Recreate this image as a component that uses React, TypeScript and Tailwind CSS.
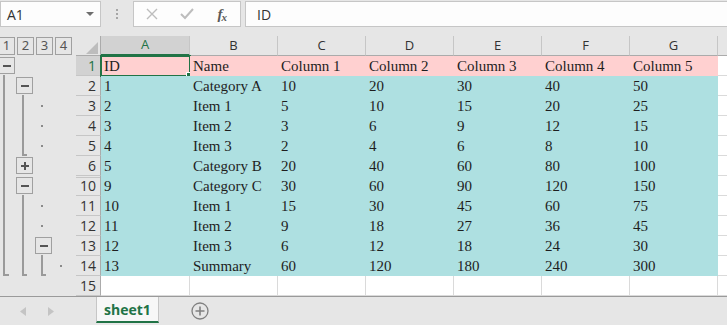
import React from 'react';

type Row = { n: number; cells: string[]; bg?: string };

const rows: Row[] = [
  { n: 1, cells: ['ID', 'Name', 'Column 1', 'Column 2', 'Column 3', 'Column 4', 'Column 5'], bg: 'pink' },
  { n: 2, cells: ['1', 'Category A', '10', '20', '30', '40', '50'], bg: 'teal' },
  { n: 3, cells: ['2', 'Item 1', '5', '10', '15', '20', '25'], bg: 'teal' },
  { n: 4, cells: ['3', 'Item 2', '3', '6', '9', '12', '15'], bg: 'teal' },
  { n: 5, cells: ['4', 'Item 3', '2', '4', '6', '8', '10'], bg: 'teal' },
  { n: 6, cells: ['5', 'Category B', '20', '40', '60', '80', '100'], bg: 'teal' },
  { n: 10, cells: ['9', 'Category C', '30', '60', '90', '120', '150'], bg: 'teal' },
  { n: 11, cells: ['10', 'Item 1', '15', '30', '45', '60', '75'], bg: 'teal' },
  { n: 12, cells: ['11', 'Item 2', '9', '18', '27', '36', '45'], bg: 'teal' },
  { n: 13, cells: ['12', 'Item 3', '6', '12', '18', '24', '30'], bg: 'teal' },
  { n: 14, cells: ['13', 'Summary', '60', '120', '180', '240', '300'], bg: 'teal' },
  { n: 15, cells: ['', '', '', '', '', '', ''] },
];

const cols = ['A', 'B', 'C', 'D', 'E', 'F', 'G'];

function OutlineGutter() {
  const btn = '#a0a0a0';
  const line = '#9a9a9a';
  return (
    <div className="w-[76px] flex flex-col">
      {/* level buttons */}
      <div className="h-5 flex gap-[2px] ml-[-2px] pt-px">
        {['1', '2', '3', '4'].map((l) => (
          <div
            key={l}
            className="w-[17px] h-[18px] border border-[#a0a0a0] flex items-center justify-center text-[13px] text-[#555]"
          >
            {l}
          </div>
        ))}
      </div>
      <svg width="76" height="240" className="block">
        <g fill="none" stroke={line} strokeWidth="2">
          <path d="M4 19 V219 H9" />
          <path d="M23 39 V99 H27" />
          <path d="M23 139 V219 H27" />
          <path d="M42 199 V219 H46" />
        </g>
        <g fill="#e6e6e6" stroke={btn} strokeWidth="1">
          <rect x="-2.5" y="1.5" width="17" height="16" />
          <rect x="16.5" y="21.5" width="16" height="16" />
          <rect x="16.5" y="101.5" width="16" height="16" />
          <rect x="16.5" y="121.5" width="16" height="16" />
          <rect x="35.5" y="181.5" width="16" height="16" />
        </g>
        <g fill="#555">
          <rect x="3" y="9" width="8" height="2" />
          <rect x="21" y="29" width="8" height="2" />
          <rect x="21" y="109" width="8" height="2" />
          <rect x="24" y="106" width="2" height="8" />
          <rect x="21" y="129" width="8" height="2" />
          <rect x="40" y="189" width="8" height="2" />
        </g>
        <g fill="#8a8a8a">
          <rect x="41" y="49" width="2" height="2" />
          <rect x="41" y="69" width="2" height="2" />
          <rect x="41" y="89" width="2" height="2" />
          <rect x="41" y="149" width="2" height="2" />
          <rect x="41" y="169" width="2" height="2" />
          <rect x="60" y="209" width="2" height="2" />
        </g>
      </svg>
    </div>
  );
}

function FormulaBar() {
  return (
    <div className="h-9 flex items-start pt-px font-['Open_Sans'] text-[14px] text-[#333]">
      <div className="w-[101px] h-[26px] bg-[#fdfdfd] border border-[#c6c6c6] flex items-center pl-[6px] pr-[6px] justify-between">
        <span>A1</span>
        <svg width="8" height="5" viewBox="0 0 8 5">
          <path d="M0 0 H8 L4 4 Z" fill="#6e6e6e" />
        </svg>
      </div>
      <div className="w-8 h-[26px] flex flex-col items-center justify-center gap-[2px]">
        <div className="w-[2px] h-[2px] bg-[#a6a6a6]" />
        <div className="w-[2px] h-[2px] bg-[#a6a6a6]" />
        <div className="w-[2px] h-[2px] bg-[#a6a6a6]" />
      </div>
      <div className="w-[108px] h-[26px] bg-[#fdfdfd] border border-[#c6c6c6] flex items-center">
        <div className="w-9 flex justify-center">
          <svg width="12" height="12" viewBox="0 0 12 12">
            <path d="M1 1 L11 11 M11 1 L1 11" stroke="#bdbdbd" strokeWidth="1.4" />
          </svg>
        </div>
        <div className="w-9 flex justify-center">
          <svg width="14" height="12" viewBox="0 0 14 12">
            <path d="M1 6 L5 10 L13 1" stroke="#bdbdbd" strokeWidth="2" fill="none" />
          </svg>
        </div>
        <div className="w-9 flex justify-center items-baseline font-['Liberation_Serif'] italic font-bold text-[15px] text-[#5a5a5a] leading-none">
          <span>f</span>
          <span className="text-[11px] relative top-[2px] -ml-px">x</span>
        </div>
      </div>
      <div className="flex-1 ml-1 h-[26px] bg-[#fdfdfd] border border-[#c6c6c6] border-r-0 flex items-center pl-[11px]">
        ID
      </div>
    </div>
  );
}

function Sheet() {
  return (
    <div className="flex-1 grid grid-cols-[25px_89px_88px_88px_88px_88px_88px_88px_9px] auto-rows-[20px] font-['Open_Sans']">
      {/* header row */}
      <div className="relative border-r border-b border-r-[#ababab] border-b-[#ababab]">
        <svg width="12" height="12" className="absolute right-[2px] bottom-[1px]">
          <path d="M12 0 V12 H0 Z" fill="#bdbdbd" />
        </svg>
      </div>
      {cols.map((c, i) => (
        <div
          key={c}
          className={
            i === 0
              ? 'flex items-center justify-center text-[13px] border-r border-r-[#c6c6c6] border-b-2 border-b-[#217346] bg-[#d2d2d2] text-[#217346]'
              : 'flex items-center justify-center text-[13px] border-r border-r-[#c6c6c6] border-b border-b-[#ababab] text-[#333]'
          }
        >
          {c}
        </div>
      ))}
      <div className="border-b border-b-[#ababab]" />

      {rows.map((r) => (
        <React.Fragment key={r.n}>
          <div
            className={[
              'flex items-center justify-end pr-[4px] text-[14px] border-r border-b border-r-[#ababab] border-b-[#c6c6c6]',
              r.n === 1 ? 'bg-[#d2d2d2] text-[#217346]' : 'text-[#333]',
              r.n === 10 ? 'shadow-[inset_0_1px_0_#e6e6e6,inset_0_2px_0_#c6c6c6]' : '',
            ].join(' ')}
          >
            {r.n}
          </div>
          {r.cells.map((v, i) => {
            const base =
              "relative flex items-center pl-[3px] font-['Liberation_Serif'] text-[15px] text-[#1e1e1e] whitespace-nowrap";
            const bg =
              r.bg === 'pink'
                ? 'bg-[#ffd0d0]'
                : r.bg === 'teal'
                ? 'bg-[#aee0e1]'
                : 'bg-white border-r border-b border-[#dadada]';
            return (
              <div key={i} className={`${base} ${bg}`}>
                {v}
                {r.n === 1 && i === 0 && (
                  <div className="absolute -left-px -top-[1px] w-[91px] h-[22px] border-2 border-[#217346]">
                    <div className="absolute -right-[4px] -bottom-[4px] w-[7px] h-[7px] bg-[#217346] border border-white" />
                  </div>
                )}
              </div>
            );
          })}
          <div className="bg-white border-b border-[#dadada]" />
        </React.Fragment>
      ))}
    </div>
  );
}

function TabBar() {
  return (
    <div className="h-[29px] border-t border-[#9a9a9a] flex items-stretch font-['Open_Sans']">
      <div className="w-[96px] flex items-center pl-[20px] gap-[20px]">
        <svg width="7" height="9" viewBox="0 0 7 9">
          <path d="M6 0 V9 L0 4.5 Z" fill="#c4c4c4" />
        </svg>
        <svg width="7" height="9" viewBox="0 0 7 9">
          <path d="M1 0 V9 L7 4.5 Z" fill="#c4c4c4" />
        </svg>
      </div>
      <div className="w-[63px] h-[26px] bg-[#f7f7f7] border-x border-[#c6c6c6] border-b-2 border-b-[#217346] flex items-center justify-center text-[14px] font-bold text-[#217346]">
        sheet1
      </div>
      <div className="pl-[32px] flex items-center pb-[1px]">
        <svg width="18" height="18" viewBox="0 0 18 18">
          <circle cx="9" cy="9" r="8" fill="none" stroke="#808080" strokeWidth="1.3" />
          <path d="M9 4.5 V13.5 M4.5 9 H13.5" stroke="#808080" strokeWidth="1.6" />
        </svg>
      </div>
    </div>
  );
}

export default function App() {
  return (
    <div className="w-[727px] h-[325px] bg-[#e6e6e6] flex flex-col overflow-hidden">
      <FormulaBar />
      <div className="flex h-[260px]">
        <OutlineGutter />
        <Sheet />
      </div>
      <TabBar />
    </div>
  );
}
